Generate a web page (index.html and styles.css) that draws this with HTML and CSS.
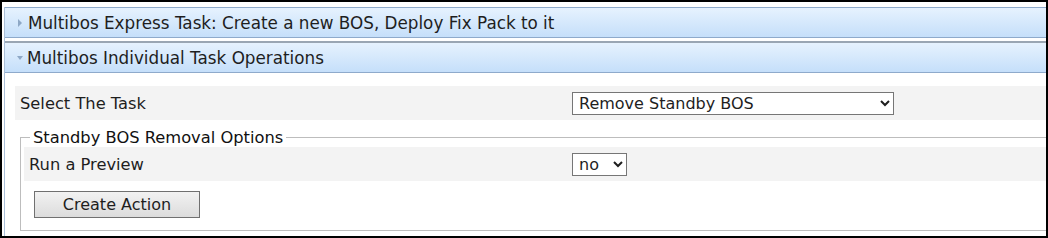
FILE: index.html
```html
<!DOCTYPE html>
<html lang="en">
<head>
  <meta charset="UTF-8" />
  <title>Multibos Tasks</title>
  <link rel="stylesheet" href="styles.css">
</head>
<body>

  <div class="frame">
    <div class="panel">

      <div class="head closed"><span class="arrow"></span>Multibos Express Task: Create a new BOS, Deploy Fix Pack to it</div>
      <div class="head open"><span class="arrow"></span>Multibos Individual Task Operations</div>

      <div class="content">
        <div class="row">
          <label class="label">Select The Task</label>
          <select class="task">
            <option>Remove Standby BOS</option>
          </select>
        </div>

        <!-- Options for the chosen task -->
        <fieldset class="options">
          <legend>Standby BOS Removal Options</legend>
          <div class="row inner">
            <label class="label">Run a Preview</label>
            <select class="small">
              <option>no</option>
              <option>yes</option>
            </select>
          </div>
          <button class="action">Create Action</button>
        </fieldset>
      </div>

    </div>
  </div>

</body>
</html>
```

FILE: styles.css
```css
body {
  margin: 0;
  height: 238px;
  background: #000;
  font-family: 'DejaVu Sans', Verdana, sans-serif;
  font-size: 16px;
  color: #1e1e1e;
  overflow: hidden;
}

.frame {
  margin: 2px;
  height: 234px;
  background: #fff;
  overflow: hidden;
}

.panel {
  width: 1100px;
  margin: 5px 0 0 2px;
  height: 300px;
  border-left: 1px solid #aabfd8;
}

.head {
  display: flex;
  align-items: center;
  height: 29px;
  padding-left: 12px;
  font-size: 16.8px;
  background: linear-gradient(#e6f2fe, #c5dffa);
  border-top: 1px solid #8eaacb;
  border-bottom: 1px solid #8eaacb;
  white-space: nowrap;
}

.head.open {
  margin-top: 3px;
  border-top: 2px solid #9aa6b3;
}

.arrow {
  width: 0;
  height: 0;
  margin-right: 6px;
}

.closed .arrow {
  border-top: 4px solid transparent;
  border-bottom: 4px solid transparent;
  border-left: 4px solid #8ea8c6;
  margin-left: 1px;
  margin-right: 6px;
}

.open .arrow {
  border-left: 3.5px solid transparent;
  border-right: 3.5px solid transparent;
  border-top: 4px solid #8ea8c6;
  margin-right: 4px;
}

.content {
  padding: 13px 0 0 10px;
}

.row {
  display: grid;
  grid-template-columns: 557px auto;
  justify-content: start;
  align-items: center;
  height: 34px;
  background: #f3f3f3;
}

.row.inner {
  grid-template-columns: 548px auto;
}

.label {
  padding-left: 5px;
  font-size: 16.3px;
}

select {
  height: 23px;
  font-family: inherit;
  font-size: 16px;
  color: #1e1e1e;
  background: #fff;
  border: 1px solid #767676;
  border-radius: 0;
  padding: 0 2px;
}

.task {
  width: 322px;
}

.small {
  width: 55px;
}

.options {
  margin: 8px 0 0 5px;
  padding: 0 0 12px 3px;
  border: 1px solid #bdbdbd;
}

.options legend {
  margin-left: 6px;
  padding: 0 3px;
  font-size: 16.3px;
  color: #111;
}

.action {
  display: block;
  margin: 10px 0 0 10px;
  width: 166px;
  height: 27px;
  font-family: inherit;
  font-size: 16px;
  color: #1e1e1e;
  background: linear-gradient(#f2f2f2, #dcdcdc);
  border: 1px solid #707070;
  border-radius: 0;
}
```
